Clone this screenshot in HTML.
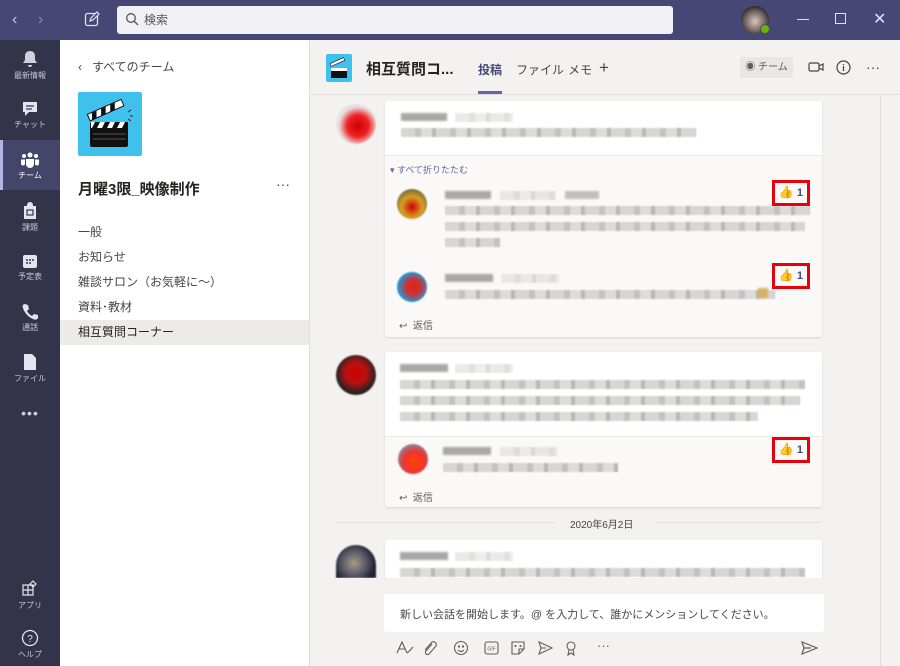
<!DOCTYPE html>
<html><head><meta charset="utf-8"><style>
*{margin:0;padding:0;box-sizing:border-box}
body{width:900px;height:666px;overflow:hidden;position:relative;background:#f3f2f1;font-family:"Liberation Sans","Noto Sans CJK JP",sans-serif;color:#252423}
.a{position:absolute}
.top{left:0;top:0;width:900px;height:40px;background:#464775}
.rail{left:0;top:40px;width:60px;height:626px;background:#33344a}
.ri{position:absolute;left:0;width:60px;text-align:center;color:#c8c6d8;font-size:8px}
.ri svg{display:block;margin:0 auto 2px}
.panel{left:60px;top:40px;width:250px;height:626px;background:#fff;border-right:1px solid #e1dfdd}
.ch{position:absolute;left:0;width:249px;height:25px;font-size:12px;color:#484644;padding-left:18px;line-height:25px}
.card{position:absolute;left:385px;width:437px;background:#fff;border-radius:3px;box-shadow:0 1px 2px rgba(0,0,0,.12)}
.rep{background:#faf9f8;border-top:1px solid #edebe9}
.bl{position:absolute;height:9px;background:repeating-linear-gradient(90deg,#d8d6d4 0 14px,#c4c2c0 14px 20px,#dedcda 20px 31px,#b9b7b5 31px 35px);filter:blur(.8px)}
.bn{position:absolute;height:8px;background:#a9a7a5;filter:blur(1px)}
.av{position:absolute;width:40px;height:40px;border-radius:50%;filter:blur(.8px)}
.sav{position:absolute;width:30px;height:30px;border-radius:50%;filter:blur(.7px)}
.like{position:absolute;width:38px;height:26px;border:3px solid #e8000b;font-size:11px;color:#464775;font-weight:bold;text-align:right;padding-right:4px;line-height:19px}
.like span{color:#f0b323;font-size:12px;margin-right:3px}
.reply{position:absolute;font-size:10px;color:#605e5c}
</style></head><body>
<div class="a top"></div>
<div class="a" style="left:12px;top:11px;color:#c8c8e0;font-size:16px">&#8249;</div>
<div class="a" style="left:38px;top:11px;color:#8a8ab0;font-size:16px">&#8250;</div>
<svg class="a" style="left:84px;top:11px" width="16" height="16" viewBox="0 0 16 16"><rect x="1.5" y="2.5" width="12" height="12" rx="2" fill="none" stroke="#e0e0f0" stroke-width="1.3"/><path d="M6 10l1-3 6-6 2 2-6 6z" fill="#464775" stroke="#e0e0f0" stroke-width="1.2"/></svg>
<div class="a" style="left:117px;top:6px;width:556px;height:28px;background:#f1f1f5;border-radius:3px"></div>
<svg class="a" style="left:125px;top:12px" width="14" height="14" viewBox="0 0 14 14"><circle cx="6" cy="6" r="4.3" fill="none" stroke="#555" stroke-width="1.3"/><path d="M9 9l4 4" stroke="#555" stroke-width="1.3"/></svg>
<div class="a" style="left:144px;top:11px;font-size:12px;color:#555">検索</div>
<div class="a" style="left:741px;top:6px;width:28px;height:28px;border-radius:50%;background:radial-gradient(circle at 50% 55%,#d8c8c0 0,#7a6a68 45%,#2a2626 75%)"></div>
<div class="a" style="left:760px;top:24px;width:10px;height:10px;border-radius:50%;background:#6bb700;border:1px solid #464775"></div>
<div class="a" style="left:797px;top:19px;width:12px;height:1px;background:#e0e0f0"></div>
<div class="a" style="left:835px;top:13px;width:11px;height:11px;border:1.3px solid #e0e0f0"></div>
<div class="a" style="left:873px;top:9px;color:#e0e0f0;font-size:16px">✕</div>

<div class="a rail"></div>
<div class="a" style="left:0;top:140px;width:60px;height:50px;background:#44456a"></div>
<div class="a" style="left:0;top:140px;width:3px;height:50px;background:#b3b4e6"></div>
<div class="ri" style="top:50px"><svg width="16" height="18" viewBox="0 0 16 18"><path d="M8 1c3 0 5 2 5 5v4l2 3H1l2-3V6c0-3 2-5 5-5z M6 15h4a2 2 0 0 1-4 0z" fill="#d0d0e0"/></svg>最新情報</div>
<div class="ri" style="top:101px"><svg width="18" height="16" viewBox="0 0 18 16"><path d="M2 1h14v10H8l-4 4v-4H2z" fill="#e4e4ee"/><path d="M5 5h8M5 8h6" stroke="#33344a" stroke-width="1.2"/></svg>チャット</div>
<div class="ri" style="top:152px;color:#fff"><svg width="20" height="16" viewBox="0 0 20 16"><circle cx="10" cy="3" r="2.5" fill="#fff"/><circle cx="4" cy="4" r="2" fill="#fff"/><circle cx="16" cy="4" r="2" fill="#fff"/><path d="M6 7h8v5a4 4 0 0 1-8 0z M1 7.5h4v4a2 2 0 0 1-4 0z M15 7.5h4v4a2 2 0 0 1-4 0z" fill="#fff"/></svg>チーム</div>
<div class="ri" style="top:202px"><svg width="16" height="18" viewBox="0 0 16 18"><path d="M5 3a3 3 0 0 1 6 0v1h3v13H2V4h3z" fill="#e4e4ee"/><rect x="5" y="8" width="6" height="5" fill="none" stroke="#33344a" stroke-width="1.2"/></svg>課題</div>
<div class="ri" style="top:253px"><svg width="16" height="16" viewBox="0 0 16 16"><rect x="1" y="2" width="14" height="13" rx="2" fill="#e4e4ee"/><path d="M4 7h2M7 7h2M10 7h2M4 10h2M7 10h2" stroke="#33344a" stroke-width="1.4"/></svg>予定表</div>
<div class="ri" style="top:303px"><svg width="16" height="17" viewBox="0 0 16 17"><path d="M3 1l3 1 1 4-2 2c1 2 3 4 5 5l2-2 4 1 0 3c-1 2-3 2-5 1C6 14 2 9 1 5 0 3 1 1 3 1z" fill="#e4e4ee"/></svg>通話</div>
<div class="ri" style="top:353px"><svg width="14" height="18" viewBox="0 0 14 18"><path d="M1 1h8l4 4v12H1z" fill="#e4e4ee"/></svg>ファイル</div>
<div class="ri" style="top:405px;font-size:14px;letter-spacing:1px;color:#d0d0e0">•••</div>
<div class="ri" style="top:580px"><svg width="18" height="18" viewBox="0 0 18 18"><path d="M2 5h5v5H2zM2 10h5v5H2zM7 10h5v5H7zM7 5h5v5H7" fill="none" stroke="#e4e4ee" stroke-width="1.2"/><path d="M12 1l3 3-3 3-3-3z" fill="none" stroke="#e4e4ee" stroke-width="1.2"/></svg>アプリ</div>
<div class="ri" style="top:629px"><svg width="18" height="18" viewBox="0 0 18 18"><circle cx="9" cy="9" r="7.5" fill="none" stroke="#e4e4ee" stroke-width="1.3"/><text x="9" y="13" font-size="10" text-anchor="middle" fill="#e4e4ee" font-family="Liberation Sans">?</text></svg>ヘルプ</div>

<div class="a panel">
<div class="a" style="left:18px;top:18px;font-size:12px;color:#484644">&#8249;&nbsp;&nbsp; すべてのチーム</div>
<div class="a" style="left:18px;top:52px;width:64px;height:64px;background:#3fc1ee;border-radius:2px">
<svg width="64" height="64" viewBox="0 0 64 64"><rect x="12" y="30" width="38" height="25" rx="2" fill="#111"/><path d="M13 30h37v6H13z" fill="#fff"/><path d="M17 30h5l-3 6h-5zM27 30h5l-3 6h-5zM37 30h5l-3 6h-5zM47 30h3v6h-6z" fill="#111"/><path d="M15 42h33M15 47h33" stroke="#555" stroke-width="1"/><g transform="rotate(-24 14 28)"><rect x="12" y="21" width="37" height="7" fill="#fff" stroke="#111" stroke-width="1"/><path d="M17 21h5l-3 7h-5zM27 21h5l-3 7h-5zM37 21h5l-3 7h-5z" fill="#111"/></g><path d="M50 20l3-2M52 24l3 0M50 27l3 2" stroke="#222"/></svg></div>
<div class="a" style="left:18px;top:138px;font-size:15px;font-weight:bold;color:#252423">月曜3限_映像制作</div>
<div class="a" style="left:216px;top:136px;font-size:14px;color:#444">···</div>
<div class="ch" style="top:180px">一般</div>
<div class="ch" style="top:205px">お知らせ</div>
<div class="ch" style="top:230px">雑談サロン（お気軽に〜）</div>
<div class="ch" style="top:255px">資料･教材</div>
<div class="ch" style="top:280px;background:#edebe9;color:#252423">相互質問コーナー</div>
</div>

<!-- header -->
<div class="a" style="left:311px;top:40px;width:589px;height:55px;background:#f3f2f1;border-bottom:1px solid #e1dfdd"></div>
<div class="a" style="left:326px;top:54px;width:26px;height:28px;background:#3fc1ee;border-radius:2px"><svg width="26" height="28" viewBox="0 0 26 28"><rect x="5" y="14" width="16" height="10" fill="#111"/><path d="M5 14h16v3H5z" fill="#fff"/><g transform="rotate(-24 6 12)"><rect x="5" y="9" width="15" height="3" fill="#fff" stroke="#111" stroke-width=".6"/></g></svg></div>
<div class="a" style="left:366px;top:58px;font-size:15px;font-weight:bold">相互質問コ...</div>
<div class="a" style="left:478px;top:61px;font-size:12px;color:#464775;font-weight:bold">投稿</div>
<div class="a" style="left:478px;top:91px;width:24px;height:3px;background:#6264a7"></div>
<div class="a" style="left:516px;top:61px;font-size:12px;color:#484644">ファイル</div>
<div class="a" style="left:568px;top:61px;font-size:12px;color:#484644">メモ</div>
<div class="a" style="left:599px;top:58px;font-size:17px;color:#484644;line-height:20px">+</div>
<div class="a" style="left:740px;top:57px;width:53px;height:21px;background:#e8e7e6;border-radius:2px;font-size:10px;color:#605e5c;line-height:21px;text-align:center">◉ チーム</div>
<svg class="a" style="left:807px;top:60px" width="18" height="14" viewBox="0 0 18 14"><rect x="2" y="3" width="10" height="8" rx="1.5" fill="none" stroke="#444" stroke-width="1.2"/><path d="M12 6l4-2v6l-4-2" fill="none" stroke="#444" stroke-width="1.2"/></svg>
<svg class="a" style="left:836px;top:60px" width="15" height="15" viewBox="0 0 15 15"><circle cx="7.5" cy="7.5" r="6.5" fill="none" stroke="#444" stroke-width="1.2"/><path d="M7.5 6v5M7.5 4v1" stroke="#444" stroke-width="1.3"/></svg>
<div class="a" style="left:866px;top:59px;font-size:14px;color:#444">···</div>
<div class="a" style="left:880px;top:96px;width:1px;height:570px;background:#e1dfdd"></div>

<!-- card 1 -->
<div class="av" style="left:336px;top:104px;background:radial-gradient(circle at 55% 55%,#c00 0,#e22 35%,#e8e0e0 62%)"></div>
<div class="card" style="top:101px;height:236px">
 <div class="bn" style="left:16px;top:12px;width:46px"></div><div class="bl" style="left:70px;top:12px;width:58px;opacity:.5"></div>
 <div class="bl" style="left:16px;top:27px;width:295px"></div>
 <div class="rep a" style="left:0;top:54px;width:437px;height:182px;border-radius:0 0 3px 3px"></div>
 <div class="a" style="left:5px;top:62px;font-size:9px;color:#6264a7">▾ すべて折りたたむ</div>
 <div class="sav" style="left:12px;top:88px;background:radial-gradient(circle at 50% 60%,#c00 0,#d8a020 45%,#7a6a40 75%)"></div>
 <div class="bn" style="left:60px;top:90px;width:46px"></div><div class="bl" style="left:115px;top:90px;width:56px;opacity:.5"></div><div class="bn" style="left:180px;top:90px;width:34px;opacity:.7"></div>
 <div class="bl" style="left:60px;top:105px;width:365px"></div>
 <div class="bl" style="left:60px;top:121px;width:360px"></div>
 <div class="bl" style="left:60px;top:137px;width:55px"></div>
 <div class="sav" style="left:12px;top:171px;background:radial-gradient(circle at 55% 50%,#d22 0,#c33 35%,#2a8fcc 65%)"></div>
 <div class="bn" style="left:60px;top:173px;width:48px"></div><div class="bl" style="left:116px;top:173px;width:58px;opacity:.5"></div>
 <div class="bl" style="left:60px;top:189px;width:330px"></div>
 <div class="a" style="left:373px;top:187px;width:10px;height:10px;background:#d8b060;filter:blur(1px)"></div>
 <div class="reply" style="left:14px;top:216px">↩&nbsp; 返信</div>
</div>
<div class="like" style="left:772px;top:180px"><span>👍</span>1</div>
<div class="like" style="left:772px;top:263px"><span>👍</span>1</div>

<!-- card 2 -->
<div class="av" style="left:336px;top:355px;background:radial-gradient(circle at 50% 45%,#c00 0,#b11 35%,#222 68%)"></div>
<div class="card" style="top:352px;height:155px">
 <div class="bn" style="left:15px;top:12px;width:48px"></div><div class="bl" style="left:70px;top:12px;width:58px;opacity:.5"></div>
 <div class="bl" style="left:15px;top:28px;width:405px"></div>
 <div class="bl" style="left:15px;top:44px;width:400px"></div>
 <div class="bl" style="left:15px;top:60px;width:358px"></div>
 <div class="rep a" style="left:0;top:84px;width:437px;height:71px;border-radius:0 0 3px 3px"></div>
 <div class="sav" style="left:13px;top:92px;background:radial-gradient(circle at 55% 60%,#f40 0,#e33 45%,#889 75%)"></div>
 <div class="bn" style="left:58px;top:95px;width:48px"></div><div class="bl" style="left:115px;top:95px;width:58px;opacity:.5"></div>
 <div class="bl" style="left:58px;top:111px;width:175px"></div>
 <div class="reply" style="left:14px;top:137px">↩&nbsp; 返信</div>
</div>
<div class="like" style="left:772px;top:437px"><span>👍</span>1</div>

<!-- date -->
<div class="a" style="left:337px;top:522px;width:218px;height:1px;background:#e1dfdd"></div>
<div class="a" style="left:656px;top:522px;width:165px;height:1px;background:#e1dfdd"></div>
<div class="a" style="left:570px;top:516px;font-size:10px;color:#484644">2020年6月2日</div>

<!-- card 3 -->
<div class="av" style="left:336px;top:545px;height:33px;border-radius:20px 20px 0 0;background:radial-gradient(circle at 45% 55%,#a98 0,#556 45%,#223 72%)"></div>
<div class="card" style="top:540px;height:38px;border-radius:3px 3px 0 0">
 <div class="bn" style="left:15px;top:12px;width:48px"></div><div class="bl" style="left:70px;top:12px;width:58px;opacity:.5"></div>
 <div class="bl" style="left:15px;top:28px;width:405px"></div>
</div>
<div class="a" style="left:311px;top:578px;width:569px;height:88px;background:#f3f2f1"></div>

<!-- compose -->
<div class="a" style="left:384px;top:594px;width:440px;height:38px;background:#fff;border-radius:3px"></div>
<div class="a" style="left:400px;top:606px;font-size:11px;color:#484644">新しい会話を開始します。@ を入力して、誰かにメンションしてください。</div>
<svg class="a" style="left:396px;top:639px" width="240" height="18" viewBox="0 0 240 18" fill="none" stroke="#605e5c" stroke-width="1.1">
<path d="M1 14L6 3l5 11M3 10h6M11 14c2-1 4-4 6-6"/>
<path d="M36 5l-6 7a2 2 0 0 0 3 3l7-8a3 3 0 0 0-4-4l-7 8"/>
<circle cx="65" cy="9" r="6.5"/><circle cx="63" cy="7.5" r=".6" fill="#605e5c"/><circle cx="67" cy="7.5" r=".6" fill="#605e5c"/><path d="M62 11c2 2 4 2 6 0"/>
<rect x="89" y="3" width="13" height="12" rx="2"/><text x="95.5" y="11.5" font-size="5" text-anchor="middle" fill="#605e5c" stroke="none" font-family="Liberation Sans">GIF</text>
<path d="M116 3h12v7l-5 5h-7z M123 15v-5h5"/><circle cx="119.5" cy="7" r=".5" fill="#605e5c"/><circle cx="124.5" cy="7" r=".5" fill="#605e5c"/>
<path d="M143 3l13 6-13 6 2-6z M145 9h5"/>
<circle cx="175" cy="7" r="4"/><path d="M173 11l-1 5 3-2 3 2-1-5"/>
</svg>
<div class="a" style="left:597px;top:638px;font-size:13px;color:#605e5c">···</div>
<svg class="a" style="left:801px;top:640px" width="17" height="16" viewBox="0 0 17 16"><path d="M1 2l15 6-15 6 2-6z M3 8h7" fill="none" stroke="#605e5c" stroke-width="1.2"/></svg>
</body></html>
